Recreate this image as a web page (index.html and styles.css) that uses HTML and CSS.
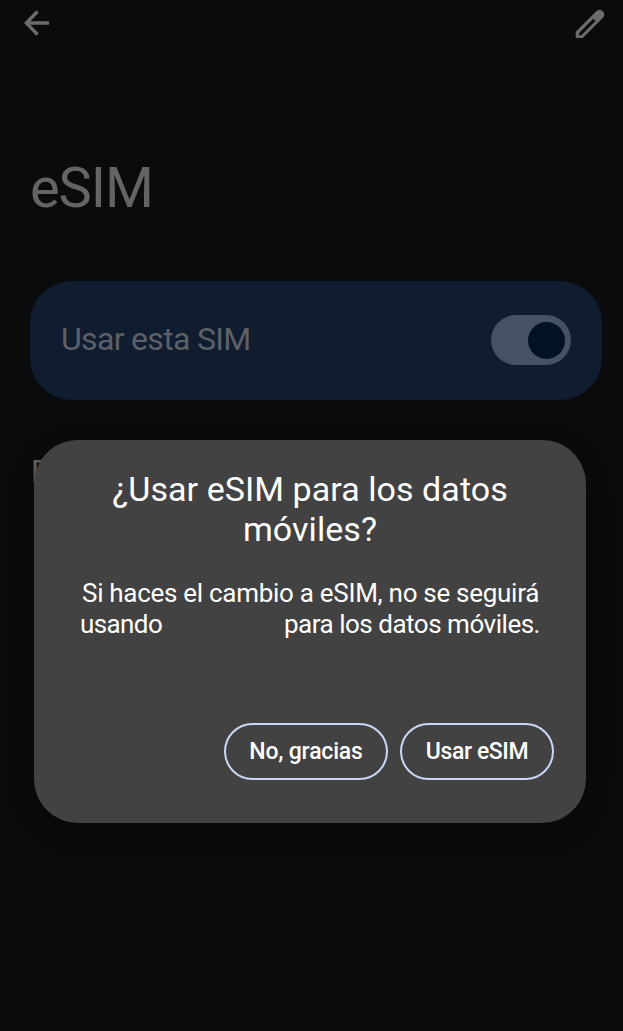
FILE: index.html
```html
<!DOCTYPE html>
<html lang="es">
<head>
<meta charset="utf-8">
<title>eSIM</title>
<link rel="stylesheet" href="styles.css">
</head>
<body>
<main class="screen">
  <header class="toolbar">
    <svg class="icon-back" width="26" height="26" viewBox="0 0 26 26"><path d="M25 13H3M13.500 1.500L2.300 13L13.500 24.500"/></svg>
    <svg class="icon-edit" width="30" height="30" viewBox="0 0 30 30"><path fill-rule="evenodd" d="M.7 22.800L20.700 2.800Q24.400-.9 28 2.400Q31 5.700 27.500 9.300L7.800 29H.7ZM4 24.200V26.200H6.200L20.500 11.900L18.300 9.700Z"/></svg>
  </header>
  <h1 class="page-title">eSIM</h1>
  <section class="sim-card">
    <span class="sim-label">Usar esta SIM</span>
    <span class="switch"><span class="thumb"></span></span>
  </section>
  <div class="section-label">P</div>
</main>
<section class="dialog" role="dialog">
  <h2 class="dialog-title">¿Usar eSIM para los datos<br>móviles?</h2>
  <div class="message">
    <div class="row">Si haces el cambio a eSIM, no se seguirá</div>
    <div class="row split"><span class="lead">usando</span><span class="rest">para los datos móviles.</span></div>
  </div>
  <div class="actions">
    <button class="btn no">No, gracias</button>
    <button class="btn yes">Usar eSIM</button>
  </div>
</section>
</body>
</html>
```
FILE: styles.css
```css
* { box-sizing: border-box; }
body { margin: 0; background: #0a0b0d; font-family: Roboto, sans-serif; position: relative; height: 1031px; overflow: hidden; }
.screen { padding: 0 21px 0 30px; color: #646466; }
.toolbar { display: flex; justify-content: space-between; height: 48px; padding-top: 8px; margin: 0 -3px 0 -7px; }
.icon-back { margin-top: 2px; margin-left: 1px; fill: none; stroke: #6b6b6b; stroke-width: 3.400; }
.icon-edit { fill: #6b6b6b; margin-top: 1px; }
.page-title { margin: 107px 0 0; height: 66px; font-size: 56px; line-height: 66px; font-weight: 400; letter-spacing: -1.100px; }
.sim-card { margin-top: 60px; height: 119px; border-radius: 42px; background: #101c2f; display: flex; align-items: center; justify-content: space-between; padding: 0 31px; }
.sim-label { font-size: 32px; color: #5d6067; letter-spacing: -.68px; margin-top: -3px; }
.switch { width: 80px; height: 50px; border-radius: 25px; background: #455166; display: flex; align-items: center; justify-content: flex-end; padding-right: 6px; margin-top: -1px; }
.thumb { width: 37px; height: 37px; border-radius: 50%; background: #021126; }
.section-label { margin: 53px 0 0 1px; font-size: 31px; line-height: 38px; }
.dialog { position: absolute; left: 34px; top: 440px; width: 552px; height: 383px; border-radius: 44px; background: #424242; color: #fff; padding: 29px 32px 0 45px; box-shadow: 0 8px 24px rgba(0,0,0,.25); }
.dialog-title { margin: 0 13px 0 0; font-size: 34px; line-height: 40px; font-weight: 400; text-align: center; white-space: nowrap; letter-spacing: .06px; }
.message { margin: 29px 14px 0 1px; font-size: 26px; line-height: 31px; white-space: nowrap; }
.row { padding-left: 2px; letter-spacing: -.29px; }
.split { padding-left: 0; display: flex; justify-content: space-between; }
.lead { letter-spacing: -.6px; }
.rest { letter-spacing: -.48px; }
.actions { margin-top: 83px; display: flex; justify-content: flex-end; gap: 12px; }
.btn { height: 57px; padding: 0; border: 2px solid #c9d7f5; border-radius: 29px; background: none; color: #fff; font: 500 23px/53px Roboto, sans-serif; letter-spacing: -.2px; white-space: nowrap; }
.no { width: 164px; }
.yes { width: 154px; letter-spacing: -.4px; }
```
